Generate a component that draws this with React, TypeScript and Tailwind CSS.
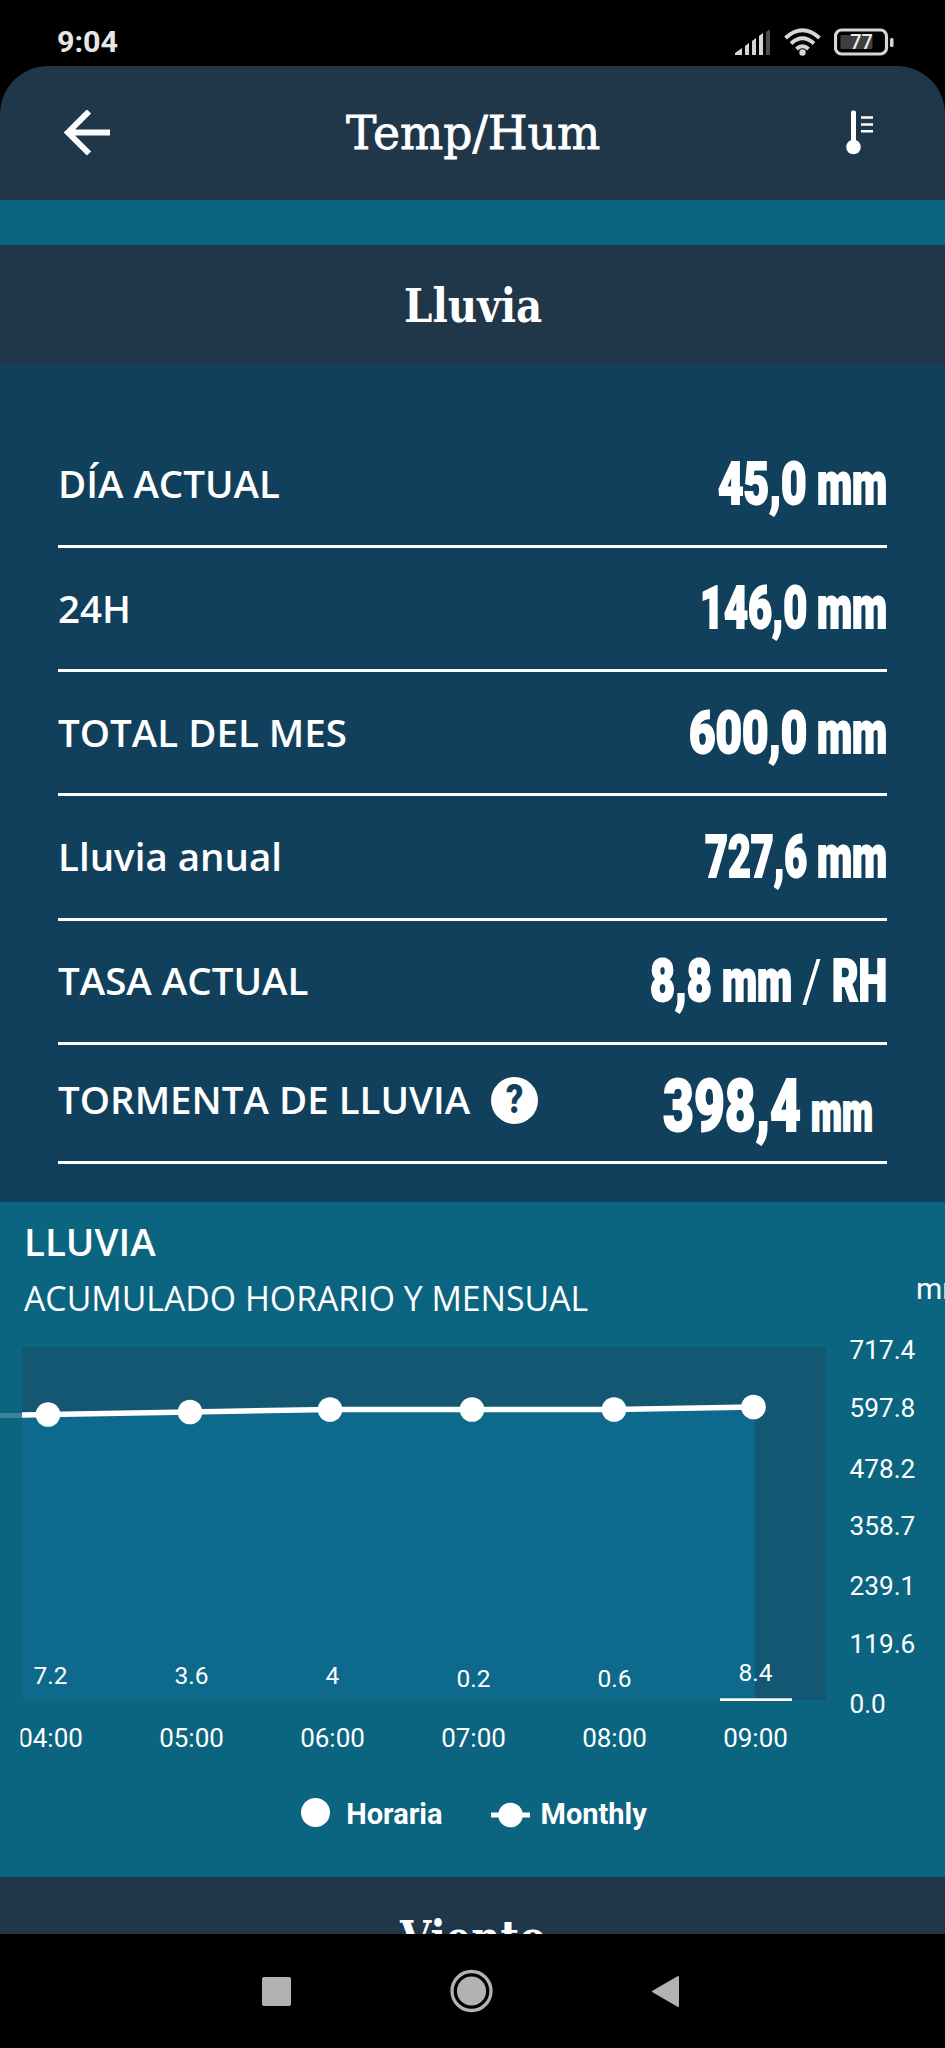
import { useLayoutEffect, useRef, useState } from "react";
import type { ReactNode } from "react";

const rows = [
    { label: "DÍA ACTUAL", parts: [{ text: "45,0", width: 89 }, { text: "mm", width: 70 }] },
    { label: "24H", parts: [{ text: "146,0", width: 107 }, { text: "mm", width: 70 }] },
    { label: "TOTAL DEL MES", parts: [{ text: "600,0", width: 118 }, { text: "mm", width: 70 }] },
    { label: "Lluvia anual", parts: [{ text: "727,6", width: 102 }, { text: "mm", width: 70 }] },
    { label: "TASA ACTUAL", parts: [{ text: "8,8", width: 62 }, { text: "mm", width: 70 }, { text: "/", width: 20 }, { text: "RH", width: 55 }] },
];

const points = [
    { x: 48, y: 84.5, hour: "04:00", value: "7.2", valueY: 354 },
    { x: 190, y: 82, hour: "05:00", value: "3.6", valueY: 354 },
    { x: 330, y: 79.5, hour: "06:00", value: "4", valueY: 354 },
    { x: 472, y: 79.5, hour: "07:00", value: "0.2", valueY: 356.5 },
    { x: 614, y: 79.5, hour: "08:00", value: "0.6", valueY: 356.5 },
    { x: 753.5, y: 77, hour: "09:00", value: "8.4", valueY: 351 },
];

const ticks = [
    { label: "717.4", y: 29 },
    { label: "597.8", y: 87 },
    { label: "478.2", y: 147.5 },
    { label: "358.7", y: 205 },
    { label: "239.1", y: 264.5 },
    { label: "119.6", y: 322.5 },
    { label: "0.0", y: 382.5 },
];

// Squeezes a piece of text horizontally so it takes exactly `width` pixels
function Fit({ width, children, className = "" }: { width: number; children: ReactNode; className?: string }) {
    const ref = useRef<HTMLSpanElement>(null);
    const [scale, setScale] = useState(1);

    useLayoutEffect(() => {
        if (ref.current) setScale(width / ref.current.offsetWidth);
    }, [width]);

    return (
        <span className={`inline-block whitespace-nowrap ${className}`} style={{ width }}>
            <span ref={ref} className="inline-block origin-left" style={{ transform: `scaleX(${scale})` }}>
                {children}
            </span>
        </span>
    );
}

function StatusBar() {
    return (
        <div className="h-[66px] shrink-0 flex items-center justify-between pl-[57px] pr-[50px] pt-[18px]">
            <span className="text-[29px] leading-none font-bold text-[#e6e6e6]">
                <Fit width={61}>9:04</Fit>
            </span>
            <div className="flex items-center gap-[13px]">
                <svg width="36" height="28" viewBox="0 0 36 28" fill="#d6d6d6">
                    <path d="M0 27V25L7 20V27ZM10 18L14 15V27H10ZM17 13L21 10V27H17ZM24 8L28 5V27H24Z" />
                    <path d="M31 4L35 1V27H31Z" fill="#4c4c4c" />
                </svg>
                <svg width="37" height="28" viewBox="0 0 37 28" fill="none" stroke="#d6d6d6" strokeWidth="4">
                    <path d="M1.5 10Q18.5-5.500 35.500 10" />
                    <path d="M7 15.500Q18.500 5 30 15.500" />
                    <path d="M12.500 21Q18.500 15.500 24.500 21" />
                    <circle cx="18.500" cy="24.500" r="3.200" fill="#d6d6d6" stroke="none" />
                </svg>
                <svg width="61" height="28" viewBox="0 0 61 28">
                    <rect x="1.500" y="2" width="51" height="24" rx="6" fill="none" stroke="#d6d6d6" strokeWidth="3.200" />
                    <rect x="6.500" y="7" width="32" height="14" rx="1" fill="#3f3f3f" />
                    <rect x="56" y="10" width="3.500" height="9" rx="1.500" fill="#d6d6d6" />
                    <text x="27.500" y="21" textAnchor="middle" fontSize="20" fontWeight="500" fill="#ececec">77</text>
                </svg>
            </div>
        </div>
    );
}

function Header() {
    return (
        <header className="h-[134px] shrink-0 flex items-center justify-between px-[64px] rounded-t-[48px] bg-[#203649]">
            <svg width="46" height="46" viewBox="0 0 46 46" fill="none" stroke="white" strokeWidth="6">
                <path d="M46 22.500H4M25 1.500L4 22.500L25 43.500" />
            </svg>
            <h1 className="ml-[-10px] text-[46px] leading-none [-webkit-text-stroke:0.8px_white] [font-family:'DejaVu_Serif','Liberation_Serif',serif]">
                <Fit width={254}>Temp/Hum</Fit>
            </h1>
            <svg className="mr-[5px]" width="30" height="46" viewBox="0 0 30 46" fill="white">
                <rect x="5" y="0.500" width="5" height="36" rx="2" />
                <circle cx="7.500" cy="37" r="7.300" />
                <path d="M15 6.200H27V8.800H15ZM15 13.200H27V15.800H15ZM15 20H27V22.600H15Z" />
            </svg>
        </header>
    );
}

function SectionTitle({ title, width }: { title: string; width: number }) {
    return (
        <h2 className="h-[120px] shrink-0 flex items-center justify-center pt-[2px] bg-[#203649] text-[46px] leading-none font-bold [font-family:'DejaVu_Serif','Liberation_Serif',serif]">
            <Fit width={width}>{title}</Fit>
        </h2>
    );
}

function RainTotals() {
    return (
        <section className="h-[837px] shrink-0 px-[58px] pt-[58.500px] bg-[#10405c]">
            {rows.map((row) => (
                <div key={row.label} className="h-[124.300px] flex items-center justify-between border-b-3 border-white">
                    <span className="text-[38.500px] font-semibold [font-family:'Open_Sans',sans-serif]">{row.label}</span>
                    <span className="flex gap-[10px] text-[60px] leading-none font-black">
                        {row.parts.map((part) => (
                            <Fit
                                key={part.text}
                                width={part.width}
                                className={part.text === "/" ? "font-normal" : "[-webkit-text-stroke:2px_white]"}
                            >
                                {part.text}
                            </Fit>
                        ))}
                    </span>
                </div>
            ))}
            <div className="h-[118.600px] flex items-center justify-between border-b-3 border-white">
                <span className="flex items-center gap-[21px] pb-[5px] text-[38.500px] font-semibold [font-family:'Open_Sans',sans-serif]">
                    TORMENTA DE LLUVIA
                    <span className="size-[47px] flex items-center justify-center rounded-full bg-white text-[#10405c] text-[40px] leading-none font-black [font-family:Roboto,sans-serif]">
                        <Fit width={17}>?</Fit>
                    </span>
                </span>
                <span className="flex items-baseline gap-[10px] pr-[14px] pt-2 leading-none font-black [-webkit-text-stroke:2px_white]">
                    <Fit width={138} className="text-[73px]">398,4</Fit>
                    <Fit width={62} className="text-[55px]">mm</Fit>
                </span>
            </div>
        </section>
    );
}

function RainChart() {
    const line = points.map((p) => `L${p.x} ${p.y}`).join("");

    return (
        <section className="h-[675px] shrink-0 flex flex-col bg-[#0b6581]">
            <div className="h-[128px] shrink-0 flex justify-between overflow-hidden pl-6 pt-[13px] [font-family:'Open_Sans',sans-serif]">
                <div className="flex flex-col">
                    <h3 className="text-[38.500px] leading-[52px] font-semibold">LLUVIA</h3>
                    <p className="text-[33.800px] leading-[62px]">ACUMULADO HORARIO Y MENSUAL</p>
                </div>
                <span className="w-[29px] pt-[52px] text-[30px] leading-[44px] [font-family:Roboto,sans-serif]">mm</span>
            </div>
            <svg className="shrink-0" width="945" height="440" viewBox="0 0 945 440" fill="white">
                <defs>
                    <clipPath id="plot">
                        <rect x="20.500" y="0" width="830" height="440" />
                    </clipPath>
                </defs>
                <rect x="22" y="17" width="804" height="353" fill="#135772" />
                <path d={`M22 370L22 85${line}L755 78V370Z`} fill="#0d6a8c" />
                <path d="M0 85.500H22" stroke="white" strokeOpacity="0.200" strokeWidth="5" />
                <path d={`M22 85${line}`} fill="none" stroke="white" strokeWidth="5.500" />
                <rect x="720" y="368.300" width="72" height="2.700" />
                {points.map((p) => (
                    <circle key={p.hour} cx={p.x} cy={p.y} r="12.300" />
                ))}
                <g textAnchor="middle" fontSize="24.500" clipPath="url(#plot)">
                    {points.map((p, i) => (
                        <g key={p.hour}>
                            <text x={50.5 + i * 141} y={p.valueY}>{p.value}</text>
                            <text x={50.5 + i * 141} y="417" fontSize="26">{p.hour}</text>
                        </g>
                    ))}
                </g>
                {ticks.map((tick) => (
                    <text key={tick.label} x="849.500" y={tick.y} fontSize="26.200">{tick.label}</text>
                ))}
            </svg>
            <div className="flex justify-center items-center h-[90px] pl-[3px] text-[29px] font-bold">
                <span className="size-[29px] rounded-full bg-white mb-[5px]" />
                <span className="ml-4">Horaria</span>
                <svg className="ml-[48px]" width="40" height="26" viewBox="0 0 40 26" fill="white">
                    <rect y="10.500" width="39" height="5" />
                    <circle cx="19.500" cy="13" r="12.300" />
                </svg>
                <span className="ml-[10px]">Monthly</span>
            </div>
        </section>
    );
}

function NavBar() {
    return (
        <nav className="h-[114px] shrink-0 flex items-center justify-between pl-[262px] pr-[265px] bg-black text-[#b2b2b2]">
            <span className="size-[29px] rounded-[2px] bg-current" />
            <svg width="44" height="44" viewBox="0 0 44 44">
                <circle cx="22.500" cy="22" r="19.500" fill="none" stroke="currentColor" strokeWidth="3.300" />
                <circle cx="22.500" cy="22" r="14.600" fill="currentColor" />
            </svg>
            <svg width="29" height="33" viewBox="0 0 29 33" fill="currentColor" stroke="currentColor" strokeWidth="2" strokeLinejoin="round">
                <path d="M27 2V31L2 16.500Z" />
            </svg>
        </nav>
    );
}

export default function App() {
    return (
        <div className="w-[945px] h-[2048px] flex flex-col overflow-hidden bg-black text-white [font-family:Roboto,sans-serif]">
            <StatusBar />
            <Header />
            <div className="h-[45px] shrink-0 bg-[#0b6581]" />
            <SectionTitle title="Lluvia" width={138} />
            <RainTotals />
            <RainChart />
            <div className="h-[57px] shrink-0 overflow-hidden">
                <SectionTitle title="Viento" width={146} />
            </div>
            <NavBar />
        </div>
    );
}
